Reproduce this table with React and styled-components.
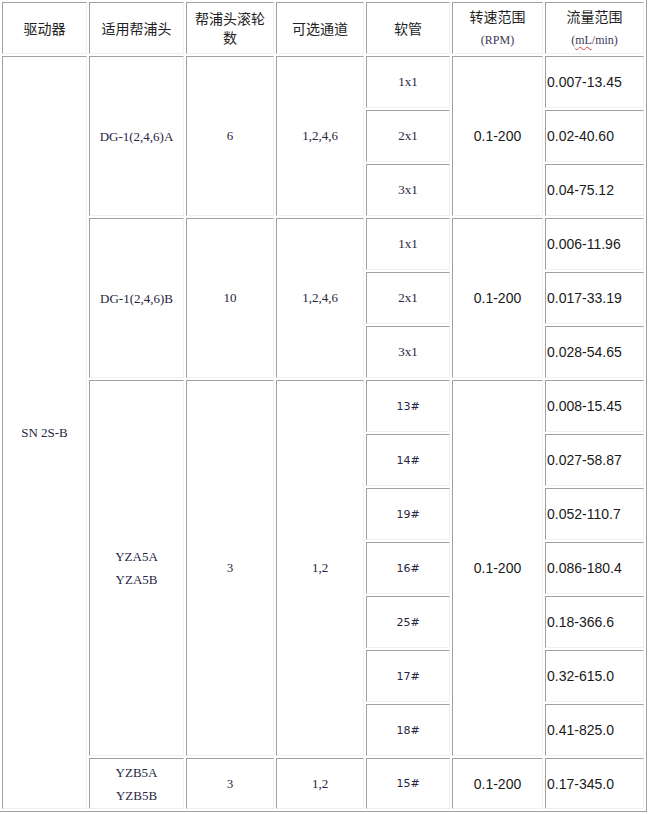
import React from 'react'
import styled, { createGlobalStyle } from "styled-components";

const Global = createGlobalStyle`
  body {
    margin: 0;
    background: #fff;
  }
`

const groups = [
  {
    pump: ['DG-1(2,4,6)A'], rollers: '6', channels: '1,2,4,6', rpm: '0.1-200',
    hoses: [['1x1', '0.007-13.45'], ['2x1', '0.02-40.60'], ['3x1', '0.04-75.12']]
  },
  {
    pump: ['DG-1(2,4,6)B'], rollers: '10', channels: '1,2,4,6', rpm: '0.1-200',
    hoses: [['1x1', '0.006-11.96'], ['2x1', '0.017-33.19'], ['3x1', '0.028-54.65']]
  },
  {
    pump: ['YZA5A', 'YZA5B'], rollers: '3', channels: '1,2', rpm: '0.1-200', sans: true,
    hoses: [
      ['13#', '0.008-15.45'], ['14#', '0.027-58.87'], ['19#', '0.052-110.7'],
      ['16#', '0.086-180.4'], ['25#', '0.18-366.6'], ['17#', '0.32-615.0'], ['18#', '0.41-825.0']
    ]
  },
  {
    pump: ['YZB5A', 'YZB5B'], rollers: '3', channels: '1,2', rpm: '0.1-200', sans: true, last: true,
    hoses: [['15#', '0.17-345.0']]
  }
]

const totalRows = groups.reduce((n, g) => n + g.hoses.length, 0)

const App = () => {
  return (
    <>
      <Global />
      <Table>
        <thead>
          <Row $h={52}>
            <Head $w={85}>驱动器</Head>
            <Head $w={95}>适用帮浦头</Head>
            <Head $w={88}>帮浦头滚轮<br />数</Head>
            <Head $w={88}>可选通道</Head>
            <Head $w={84}>软管</Head>
            <Head $w={91}>
              转速范围
              <Unit>(RPM)</Unit>
            </Head>
            <Head $w={99}>
              流量范围
              <Unit>(<Typo>mL</Typo>/min)</Unit>
            </Head>
          </Row>
        </thead>
        <tbody>
          {groups.map((g, gi) =>
            g.hoses.map((h, hi) => (
              <Row key={gi + '-' + hi} $h={g.last ? 51 : 52}>
                {gi === 0 && hi === 0 && (
                  <Cell rowSpan={totalRows}>SN 2S-B</Cell>
                )}
                {hi === 0 && (
                  <>
                    <Cell rowSpan={g.hoses.length}>
                      {g.pump.map((p) => <PumpLine key={p}>{p}</PumpLine>)}
                    </Cell>
                    <Cell rowSpan={g.hoses.length}>{g.rollers}</Cell>
                    <Cell rowSpan={g.hoses.length}>{g.channels}</Cell>
                  </>
                )}
                <Cell $sans={g.sans}>{h[0]}</Cell>
                {hi === 0 && (
                  <NumCell rowSpan={g.hoses.length} $center>{g.rpm}</NumCell>
                )}
                <NumCell>{h[1]}</NumCell>
              </Row>
            ))
          )}
        </tbody>
      </Table>
    </>
  )
}

const Table = styled.table`
  border-collapse: separate;
  border-spacing: 2px;
  border: 1px solid;
  border-color: #f0f0f0 #a0a0a0 #a0a0a0 #f0f0f0;
  margin: -1px 0 0 -1px;
`

const Row = styled.tr`
  height: ${({ $h }) => $h}px;
`

const Head = styled.th`
  box-sizing: border-box;
  width: ${({ $w }) => $w}px;
  border: 1px solid;
  border-color: #a0a0a0 #f0f0f0 #f0f0f0 #a0a0a0;
  padding: 1px;
  font-family: "Noto Sans CJK SC", "Noto Sans", sans-serif;
  font-weight: normal;
  font-size: 14px;
  line-height: 19px;
  color: #222;
  text-align: center;
  vertical-align: middle;
`

const Unit = styled.div`
  margin-top: 5px;
  font-family: "Liberation Serif", serif;
  font-size: 12px;
  line-height: 19px;
  color: #3a3a5a;
`

const Typo = styled.span`
  text-decoration: underline wavy #e04040;
  text-decoration-thickness: 1px;
  text-underline-offset: 2px;
`

const Cell = styled.td`
  box-sizing: border-box;
  border: 1px solid;
  border-color: #a0a0a0 #f0f0f0 #f0f0f0 #a0a0a0;
  padding: 1px;
  font-family: ${({ $sans }) => $sans ? '"DejaVu Sans", "Liberation Sans", sans-serif' : '"Liberation Serif", serif'};
  font-size: ${({ $sans }) => $sans ? '11px' : '13px'};
  color: #262640;
  text-align: center;
  vertical-align: middle;
`

const PumpLine = styled.div`
  line-height: 23px;
`

const NumCell = styled.td`
  box-sizing: border-box;
  border: 1px solid;
  border-color: #a0a0a0 #f0f0f0 #f0f0f0 #a0a0a0;
  padding: 1px;
  font-family: "Liberation Sans", Arial, sans-serif;
  font-size: 14px;
  color: #1a1a1a;
  text-align: ${({ $center }) => $center ? 'center' : 'left'};
  vertical-align: middle;
`

export default App
